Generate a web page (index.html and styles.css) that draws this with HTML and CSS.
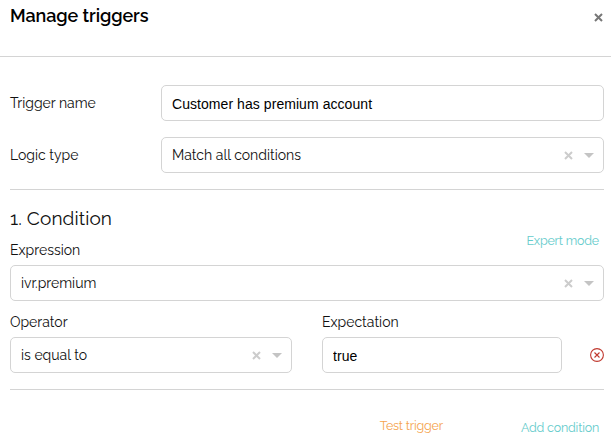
FILE: index.html
```html
<!DOCTYPE html>
<html lang="en">
<head>
    <meta charset="UTF-8">
    <meta name="viewport" content="width=device-width, initial-scale=1.0">
    <title>Manage triggers</title>
    <link rel="stylesheet" href="styles.css">
</head>
<body>

    <div class="modal">
        <div class="modal-header">
            <h2>Manage triggers</h2>
            <button class="close" aria-label="Close">
                <svg width="9" height="9" viewBox="0 0 9 9"><path d="M1 1l7 7M8 1l-7 7"/></svg>
            </button>
        </div>

        <div class="modal-body">
            <div class="form-row">
                <label for="name">Trigger name</label>
                <input type="text" id="name" value="Customer has premium account">
            </div>
            <div class="form-row">
                <label>Logic type</label>
                <div class="select">
                    <span class="value">Match all conditions</span>
                    <svg class="clear" width="9" height="9" viewBox="0 0 9 9"><path d="M1 1l7 7M8 1l-7 7"/></svg>
                    <span class="arrow"></span>
                </div>
            </div>

            <div class="condition">
                <div class="condition-header">
                    <div>
                        <h3>1. Condition</h3>
                        <label>Expression</label>
                    </div>
                    <a class="link expert">Expert mode</a>
                </div>
                <div class="select">
                    <span class="value">ivr.premium</span>
                    <svg class="clear" width="9" height="9" viewBox="0 0 9 9"><path d="M1 1l7 7M8 1l-7 7"/></svg>
                    <span class="arrow"></span>
                </div>
                <div class="condition-fields">
                    <div class="operator">
                        <label>Operator</label>
                        <div class="select">
                            <span class="value">is equal to</span>
                            <svg class="clear" width="9" height="9" viewBox="0 0 9 9"><path d="M1 1l7 7M8 1l-7 7"/></svg>
                            <span class="arrow"></span>
                        </div>
                    </div>
                    <div class="expectation">
                        <label for="expectation">Expectation</label>
                        <input type="text" id="expectation" value="true">
                    </div>
                    <button class="remove" aria-label="Remove condition">
                        <svg width="14" height="14" viewBox="0 0 14 14"><circle cx="7" cy="7" r="6.4"/><path d="M4.5 4.5l5 5M9.5 4.5l-5 5"/></svg>
                    </button>
                </div>
            </div>

            <div class="modal-footer">
                <a class="link test">Test trigger</a>
                <a class="link add">Add condition</a>
            </div>
        </div>
    </div>

</body>
</html>
```

FILE: styles.css
```css
* {
    box-sizing: border-box;
}
body {
    margin: 0;
    background-color: #fff;
    color: #111;
    font-family: Raleway, Lato, sans-serif;
    font-size: 14px;
}
.modal {
    min-height: 439px;
}
.modal-header {
    display: flex;
    justify-content: space-between;
    height: 57px;
    padding: 4px 8px 0 10px;
    border-bottom: 1px solid #d4d4d4;
}
h2 {
    margin: 0;
    font-size: 18px;
    font-weight: 600;
    line-height: 24px;
    letter-spacing: -0.08px;
    color: #000;
}
button {
    padding: 0;
    border: none;
    background: none;
    cursor: pointer;
}
svg {
    display: block;
    fill: none;
}
.close {
    height: 26px;
}
.close svg {
    stroke: #777;
    stroke-width: 2;
}
.modal-body {
    padding: 28px 7px 0 10px;
}
.form-row {
    display: flex;
    align-items: center;
    margin-bottom: 16px;
}
.form-row label {
    width: 151px;
}
.form-row input,
.form-row .select {
    flex: 1;
}
label {
    display: block;
    line-height: 20px;
    white-space: nowrap;
}
input[type="text"],
.select {
    width: 100%;
    height: 36px;
    padding: 0 10px;
    border: 1px solid #d4d4d4;
    border-radius: 5px;
    background-color: #fff;
}
input[type="text"] {
    padding-top: 2px;
    font-family: Arial, "Liberation Sans", sans-serif;
    font-size: 14px;
    letter-spacing: 0.06px;
    color: #000;
}
.select {
    display: flex;
    align-items: center;
}
.value {
    flex: 1;
}
.clear {
    margin-right: 11px;
    stroke: #ccc;
    stroke-width: 2;
}
.arrow {
    margin-right: -0.5px;
    border: 5px solid transparent;
    border-top-color: #c4c4c4;
    border-bottom: none;
}
.condition {
    height: 201px;
    padding-top: 17px;
    border-top: 1px solid #d4d4d4;
    border-bottom: 1px solid #d4d4d4;
}
.condition-header {
    display: flex;
    justify-content: space-between;
    align-items: flex-end;
    height: 58px;
}
h3 {
    margin: 0 0 10px;
    font-size: 19px;
    font-weight: 400;
    line-height: 24px;
    letter-spacing: 0.1px;
}
.condition-header label {
    margin-bottom: 5px;
}
.condition-fields {
    display: flex;
    align-items: flex-end;
    margin-top: 11px;
}
.condition-fields label {
    margin-bottom: 5px;
}
.operator {
    width: 282px;
    margin-right: 30px;
}
.expectation {
    width: 240px;
}
.remove {
    margin: 0 0 11px auto;
}
.remove svg {
    stroke: #c0392f;
    stroke-width: 1.1;
}
.link {
    font-size: 12.5px;
    line-height: 18px;
    letter-spacing: -0.2px;
    color: #64cbcb;
    cursor: pointer;
}
.expert {
    margin: 0 5px 15px 0;
}
.modal-footer {
    display: flex;
    justify-content: flex-end;
    padding: 27px 5px 0 0;
}
.test {
    margin-right: 78px;
    color: #f5a34c;
}
.add {
    margin-top: 2px;
}
```
